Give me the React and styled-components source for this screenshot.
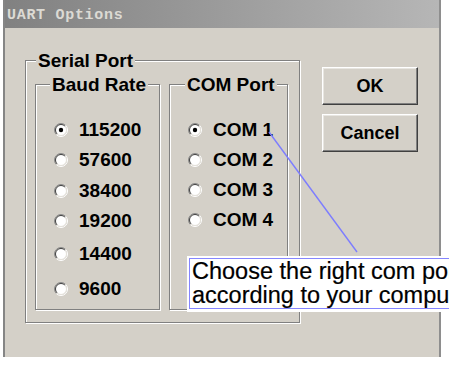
import React from "react";
import styled, { createGlobalStyle } from "styled-components";

const Global = createGlobalStyle`
  html, body { margin: 0; padding: 0; background: #ffffff; overflow: hidden; }
  body { font-family: "Liberation Sans", Arial, sans-serif; }
  * { box-sizing: border-box; }
`;

const Page = styled.div`
  position: relative;
  width: 449px;
  height: 367px;
  overflow: hidden;
`;

const Window = styled.div`
  margin-left: 3px;
  width: 438px;
  height: 357px;
  display: flex;
  flex-direction: column;
  border-left: 2px solid #858585;
  border-right: 2px solid #8e8e8e;
  background: #d4d0c8;
`;

const TitleBar = styled.div`
  height: 28px;
  flex: none;
  display: flex;
  align-items: center;
  padding-left: 2px;
  padding-top: 2px;
  background: linear-gradient(to right, #818181, #b6b6b6);
  color: #dcdad4;
  font-family: "Liberation Mono", "DejaVu Sans Mono", monospace;
  font-weight: bold;
  font-size: 15px;
  letter-spacing: 0.7px;
`;

const Body = styled.div`
  flex: 1;
  display: flex;
  align-items: flex-start;
  padding: 22px 0 0 20px;
`;

const Group = styled.fieldset`
  margin: 0;
  padding: 0;
  min-width: 0;
  width: ${(p) => p.$w}px;
  height: ${(p) => p.$h}px;
  border: 1px solid #808080;
  box-shadow: 1px 1px 0 #ffffff, inset 1px 1px 0 #ffffff;
  flex: none;
`;

const Legend = styled.legend`
  margin-left: ${(p) => p.$inset}px;
  padding: 0 2px;
  background: #d4d0c8;
  font-family: "Liberation Sans", Arial, sans-serif;
  font-weight: bold;
  font-size: 19px;
  line-height: 21px;
  color: #000;
`;

const GroupRow = styled.div`
  display: flex;
  gap: 9px;
  padding: 3px 0 0 9px;
`;

const RadioList = styled.div`
  display: flex;
  flex-direction: column;
  padding: 25px 0 0 18px;
`;

const RadioRow = styled.div`
  display: flex;
  align-items: center;
  gap: 11px;
  height: 20px;
  margin-top: ${(p) => p.$gap || 0}px;
  font-family: "Liberation Sans", Arial, sans-serif;
  font-weight: bold;
  font-size: 19px;
  line-height: 20px;
  color: #000;
`;

const RadioIcon = styled.svg`
  flex: none;
  display: block;
`;

const ButtonColumn = styled.div`
  display: flex;
  flex-direction: column;
  gap: 9px;
  margin: 17px 0 0 22px;
`;

const Button = styled.button`
  width: 96px;
  height: 38px;
  margin: 0;
  padding: 0;
  background: #d4d0c8;
  border: 1px solid;
  border-color: #ffffff #404040 #404040 #ffffff;
  box-shadow: inset -1px -1px 0 #808080, inset 1px 1px 0 #e8e6e1;
  font-family: "Liberation Sans", Arial, sans-serif;
  font-weight: bold;
  font-size: 18px;
  color: #000;
  cursor: default;
`;

const Tip = styled.div`
  position: absolute;
  left: 187px;
  top: 256px;
  width: 320px;
  padding: 2px 0 3px 2px;
  background: #ffffff;
`;

const TipInner = styled.div`
  border: 1px solid #8585ff;
  padding: 0 0 1px 2px;
  font-family: "Liberation Sans", Arial, sans-serif;
  font-size: 23.5px;
  line-height: 24px;
  color: #000;
  white-space: nowrap;
  -webkit-text-stroke: 0.2px #000;
`;

const Leader = styled.svg`
  position: absolute;
  left: 0;
  top: 0;
  pointer-events: none;
`;

const baud = [
  { v: "115200", gap: 0, checked: true },
  { v: "57600", gap: 10 },
  { v: "38400", gap: 11 },
  { v: "19200", gap: 10 },
  { v: "14400", gap: 13 },
  { v: "9600", gap: 15 },
];

const ports = [
  { v: "COM 1", gap: 0, checked: true },
  { v: "COM 2", gap: 10 },
  { v: "COM 3", gap: 10 },
  { v: "COM 4", gap: 10 },
];

function RadioMark({ checked }) {
  return (
    <RadioIcon width="14" height="14" viewBox="0 0 14 14">
      <circle cx="7" cy="7" r="5.5" fill="#ffffff" />
      <path d="M2.4 11.6 A6.5 6.5 0 0 1 11.6 2.4" fill="none" stroke="#8a8a8a" strokeWidth="1" />
      <path d="M11.6 2.4 A6.5 6.5 0 0 1 2.4 11.6" fill="none" stroke="#ffffff" strokeWidth="1" />
      <path d="M3.1 10.9 A5.5 5.5 0 0 1 10.9 3.1" fill="none" stroke="#404040" strokeWidth="1" />
      <path d="M10.9 3.1 A5.5 5.5 0 0 1 3.1 10.9" fill="none" stroke="#e4e1da" strokeWidth="1" />
      {checked && <circle cx="7" cy="7" r="2.2" fill="#000000" />}
    </RadioIcon>
  );
}

function Radio({ label, gap, checked }) {
  return (
    <RadioRow $gap={gap}>
      <RadioMark checked={checked} />
      <span>{label}</span>
    </RadioRow>
  );
}

export default function App() {
  return (
    <Page>
      <Global />
      <Window>
        <TitleBar>UART Options</TitleBar>
        <Body>
          <Group $w={275} $h={273}>
            <Legend $inset={10}>Serial Port</Legend>
            <GroupRow>
              <Group $w={125} $h={236}>
                <Legend $inset={14}>Baud Rate</Legend>
                <RadioList>
                  {baud.map((b) => (
                    <Radio key={b.v} label={b.v} gap={b.gap} checked={b.checked} />
                  ))}
                </RadioList>
              </Group>
              <Group $w={119} $h={236}>
                <Legend $inset={15}>COM Port</Legend>
                <RadioList>
                  {ports.map((p) => (
                    <Radio key={p.v} label={p.v} gap={p.gap} checked={p.checked} />
                  ))}
                </RadioList>
              </Group>
            </GroupRow>
          </Group>
          <ButtonColumn>
            <Button>OK</Button>
            <Button>Cancel</Button>
          </ButtonColumn>
        </Body>
      </Window>
      <Leader width="449" height="367" viewBox="0 0 449 367">
        <line x1="269" y1="132" x2="357" y2="252" stroke="#7d7dff" strokeWidth="1.4" />
      </Leader>
      <Tip>
        <TipInner>
          <div>Choose the right com port</div>
          <div>according to your computer</div>
        </TipInner>
      </Tip>
    </Page>
  );
}
